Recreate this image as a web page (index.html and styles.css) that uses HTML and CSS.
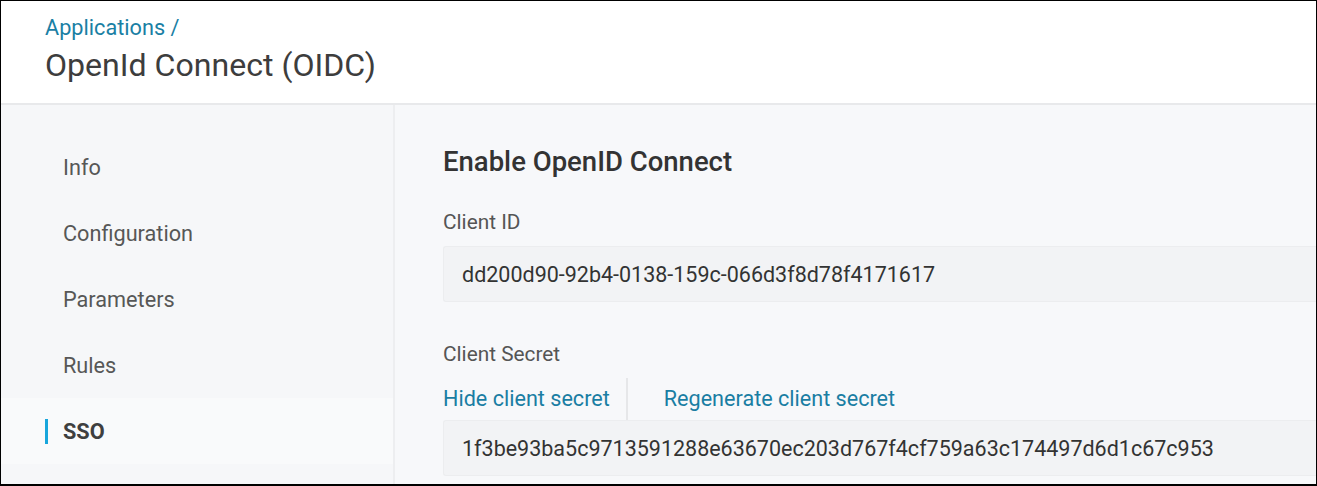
FILE: index.html
```html
<!DOCTYPE html>
<html lang="en">
<head>
<meta charset="utf-8">
<title>OpenId Connect (OIDC)</title>
<link rel="stylesheet" href="styles.css">
</head>
<body>
<div class="frame">
  <header class="page-header">
    <a class="crumb" href="#">Applications /</a>
    <h1 class="title">OpenId Connect (OIDC)</h1>
  </header>
  <div class="body">
    <nav class="sidebar">
      <div class="nav-item"><span class="nav-label">Info</span></div>
      <div class="nav-item"><span class="nav-label">Configuration</span></div>
      <div class="nav-item"><span class="nav-label">Parameters</span></div>
      <div class="nav-item"><span class="nav-label">Rules</span></div>
      <div class="nav-item active"><span class="nav-label">SSO</span></div>
    </nav>
    <main class="content">
      <h2 class="section-title">Enable OpenID Connect</h2>
      <div class="field-label first">Client ID</div>
      <div class="field-value">dd200d90-92b4-0138-159c-066d3f8d78f4171617</div>
      <div class="field-label second">Client Secret</div>
      <div class="links">
        <a class="link hide" href="#">Hide client secret</a>
        <a class="link regen" href="#">Regenerate client secret</a>
      </div>
      <div class="field-value">1f3be93ba5c9713591288e63670ec203d767f4cf759a63c174497d6d1c67c953</div>
    </main>
  </div>
</div>
</body>
</html>
```

FILE: styles.css
```css
* { box-sizing: border-box; }
html, body { margin: 0; padding: 0; }
body {
  font-family: Roboto, "Liberation Sans", Arial, sans-serif;
  background: #fff;
  color: #333;
}
.frame {
  width: 1317px;
  height: 486px;
  border: 1px solid #000;
  border-bottom-width: 2px;
  overflow: hidden;
  display: flex;
  flex-direction: column;
}
.page-header {
  height: 104px;
  flex: none;
  background: #fff;
  border-bottom: 2px solid #e8e9eb;
  padding: 14px 0 0 44px;
}
.crumb {
  display: block;
  font-size: 21.7px;
  line-height: 26px;
  color: #1a80a4;
  text-decoration: none;
}
.title {
  margin: 5px 0 0;
  font-size: 32.1px;
  line-height: 38px;
  font-weight: 400;
  color: #3d3d3d;
}
.body {
  flex: 1;
  display: flex;
  min-height: 0;
}
.sidebar {
  width: 394px;
  flex: none;
  background: #f6f7f9;
  border-right: 2px solid #edeef0;
  padding-top: 29px;
}
.nav-item {
  height: 66px;
  display: flex;
  align-items: center;
  padding-left: 44px;
}
.nav-label {
  font-size: 21.7px;
  line-height: 25px;
  color: #575757;
  padding-left: 18px;
}
.nav-item.active {
  background: #f9fafb;
}
.nav-item.active .nav-label {
  border-left: 3px solid #18a6dc;
  padding-left: 15px;
  font-weight: 700;
  color: #3f3f3f;
}
.content {
  flex: 1;
  min-width: 0;
  background: #f7f8fa;
  padding: 42px 0 0 48px;
}
.section-title {
  margin: 0;
  font-size: 27.5px;
  line-height: 30px;
  font-weight: 500;
  color: #333;
}
.field-label {
  font-size: 20.8px;
  line-height: 24px;
  color: #555;
}
.field-label.first { margin-top: 33px; margin-bottom: 12px; }
.field-label.second { margin-top: 40px; margin-bottom: 12px; }
.field-value {
  height: 56px;
  display: flex;
  align-items: center;
  background: #f2f3f5;
  border: 1px solid #ecedef;
  border-right: none;
  border-radius: 3px 0 0 3px;
  padding-left: 18px;
  font-size: 21.5px;
  color: #333;
  white-space: nowrap;
}
.links {
  display: flex;
  height: 42px;
  align-items: center;
}
.link {
  font-size: 21.6px;
  line-height: 42px;
  color: #1a7ea3;
  text-decoration: none;
}
.link.hide {
  padding-right: 16px;
  border-right: 2px solid #e6e7e9;
}
.link.regen {
  padding-left: 36px;
}
```
